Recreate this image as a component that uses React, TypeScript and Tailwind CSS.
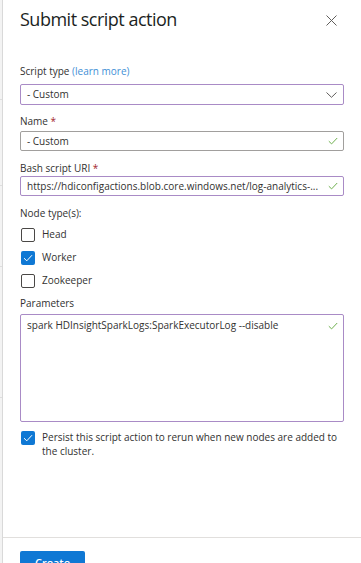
import React from "react";

const Check = ({ className = "" }: { className?: string }) => (
  <svg width="10" height="8" viewBox="0 0 10 8" className={"shrink-0 " + className}>
    <path d="M0.8 4.2 L3.6 6.9 L9.2 1" fill="none" stroke="#6fb04f" strokeWidth="1" />
  </svg>
);

const Box = ({ checked }: { checked?: boolean }) =>
  checked ? (
    <div className="w-[14px] h-[14px] rounded-[2px] bg-[#0f78d4] flex items-center justify-center shrink-0">
      <svg width="10" height="8" viewBox="0 0 10 8">
        <path d="M1 4.2 L3.8 6.8 L9 1.2" fill="none" stroke="#ffffff" strokeWidth="1" />
      </svg>
    </div>
  ) : (
    <div className="w-[14px] h-[14px] rounded-[2px] border border-[#4a4846] bg-white shrink-0" />
  );

export default function App() {
  return (
    <div className="flex w-[361px] h-[563px] bg-white overflow-hidden text-[#323130] font-['Open_Sans',sans-serif]">
      <div className="w-[3px] bg-[#f3f3f3] border-r border-[#d9d9d9] flex flex-col shrink-0">
        <div className="h-[99px]" />
        <div className="h-px bg-[#dedede]" />
        <div className="h-[85px]" />
        <div className="h-px bg-[#dedede]" />
        <div className="h-[80px]" />
        <div className="h-px bg-[#dedede]" />
        <div className="h-[130px]" />
        <div className="h-px bg-[#dedede]" />
      </div>
      <div className="flex-1 min-w-0 flex flex-col">
        <div className="px-[17px] flex flex-col">
          <div className="mt-[5px] h-[28px] flex items-center justify-between">
            <div className="text-[18px] leading-[28px] tracking-[-0.5px] text-[#201f1e]">Submit script action</div>
            <svg width="11" height="11" viewBox="0 0 11 11" className="mr-[7px] mt-[2px]">
              <path d="M0.5 0.5 L10.5 10.5 M10.5 0.5 L0.5 10.5" stroke="#605e5c" strokeWidth="1" />
            </svg>
          </div>

          <div className="mt-[30px] h-[16px] text-[10px] leading-[16px]">
            Script type <span className="text-[#3f8fd6]">(learn more)</span>
          </div>
          <div className="mt-[5px] h-[21px] border border-[#a98bc6] rounded-[2px] flex items-center justify-between pl-[6px] pr-[6px]">
            <span className="text-[10px]">- Custom</span>
            <svg width="11" height="6" viewBox="0 0 11 6">
              <path d="M0.5 0.5 L5.5 5.3 L10.5 0.5" fill="none" stroke="#605e5c" strokeWidth="1" />
            </svg>
          </div>

          <div className="mt-[8px] h-[16px] text-[10px] leading-[16px]">
            Name <span className="text-[#a4262c]">*</span>
          </div>
          <div className="mt-[2px] h-[20px] border border-[#a19f9d] rounded-[2px] flex items-center justify-between pl-[6px] pr-[5px]">
            <span className="text-[10px]">- Custom</span>
            <Check />
          </div>

          <div className="mt-[9px] h-[16px] text-[10px] leading-[16px]">
            Bash script URI <span className="text-[#a4262c]">*</span>
          </div>
          <div className="mt-0 h-[20px] border border-[#a98bc6] rounded-[2px] flex items-center justify-between gap-[6px] pl-[6px] pr-[5px] overflow-hidden">
            <span className="text-[10px] whitespace-nowrap overflow-hidden">https://hdiconfigactions.blob.core.windows.net/log-analytics-...</span>
            <Check />
          </div>

          <div className="mt-[9px] h-[16px] text-[10px] leading-[16px]">Node type(s):</div>
          <div className="mt-[2px] flex flex-col">
            {[
              ["Head", false],
              ["Worker", true],
              ["Zookeeper", false],
            ].map(([label, checked]) => (
              <div key={label as string} className="h-[23px] flex items-center gap-[7px] pl-px">
                <Box checked={checked as boolean} />
                <span className="text-[10px]">{label as string}</span>
              </div>
            ))}
          </div>

          <div className="mt-[3px] h-[16px] text-[10px] leading-[16px]">Parameters</div>
          <div className="mt-[3px] h-[108px] border border-[#a98bc6] rounded-[2px] flex items-start justify-between pl-[6px] pr-[5px] pt-[2px]">
            <span className="text-[10px] leading-[16px]">spark HDInsightSparkLogs:SparkExecutorLog --disable</span>
            <Check className="mt-[5px]" />
          </div>

          <div className="mt-[9px] flex items-start gap-[7px] pl-px">
            <Box checked />
            <span className="text-[10px] leading-[14px] -mt-px">
              Persist this script action to rerun when new nodes are added to the cluster.
            </span>
          </div>
        </div>

        <div className="mt-auto h-[26px] border-t border-[#e1dfdd] px-[17px] pt-[13px]">
          <div className="w-[65px] h-[24px] bg-[#0f78d4] rounded-[2px] text-white text-[11px] font-semibold flex items-center justify-center">
            Create
          </div>
        </div>
      </div>
    </div>
  );
}
